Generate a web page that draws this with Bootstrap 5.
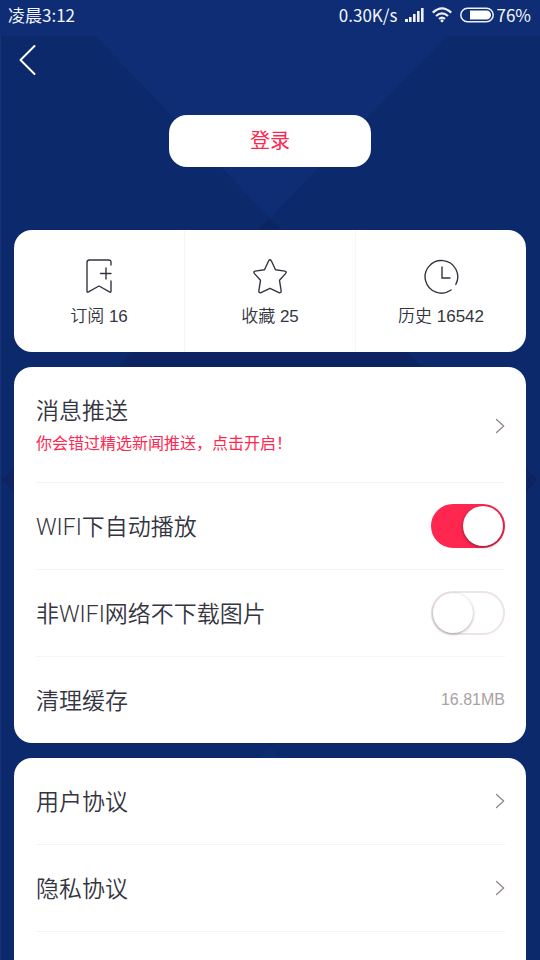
<!DOCTYPE html>
<html lang="zh-CN">
<head>
<meta charset="utf-8">
<meta name="viewport" content="width=device-width, initial-scale=1">
<title>个人中心</title>
<link href="https://cdn.jsdelivr.net/npm/bootstrap@5.3.0/dist/css/bootstrap.min.css" rel="stylesheet">
<style>
  :root { --ink: #343541; --accent: #ff264f; --hairline: #fbf1f3; }
  body { background: #0c296b; color: var(--ink); font-family: Roboto, "Noto Sans CJK SC", sans-serif; }
  .status-strip { height: 36px; padding: 0 9px 0 8px; background: #0e2d75; color: #f4f6fc; font: 17px/30px "Noto Sans CJK SC", sans-serif; }
  .indicators { height: 30px; }
  .battery { margin-right: 2px; }
  .backdrop { top: 36px; left: 0; height: 924px; z-index: -1; }
  .topbar { height: 48px; padding: 0 14px; }
  .back-btn { width: 28px; height: 48px; }
  .login-btn { width: 202px; height: 52px; margin: 31px 0 63px; border-radius: 18px; background: #fff; color: var(--accent); font-size: 20px; }
  .login-btn:hover { background: #fff; color: var(--accent); }
  .panels { padding: 0 14px; gap: 15px; }
  .panel { background: #fff; border-radius: 18px; }
  .panel-open { border-radius: 18px 18px 0 0; }
  .stat { height: 122px; padding-top: 28px; gap: 10px; color: var(--ink); font: 350 17px/26px "Liberation Sans", "Noto Sans CJK SC", sans-serif; }
  .stat + .stat { border-left: 1px solid #fbf3f5; }
  .settings { padding: 0 21px 0 22px; }
  .setting { min-height: 87px; border-bottom: 1px solid var(--hairline); color: var(--ink); font-size: 23px; line-height: 32px; font-weight: 350; }
  .setting-end { min-height: 86px; border-bottom: 0; }
  .setting-tall { min-height: 116px; padding-top: 2px; }
  .setting-name { padding-top: 4px; }
  .hint { color: var(--accent); font-size: 16px; line-height: 32px; font-weight: 400; }
  .amount { color: #aaa1a3; font: 16px/32px "Liberation Sans", sans-serif; }
  .toggle.form-check-input { width: 74px; height: 44px; margin: 0; border: 2px solid #ece4e6; border-radius: 22px; background: #fff; }
  .toggle::before { content: ""; display: block; width: 40px; height: 40px; border-radius: 50%; background: #fff; box-shadow: 0 1px 3px #776a6ea0; }
  .toggle.form-check-input:checked { background: var(--accent); border-color: var(--accent); }
  .toggle:checked::before { margin-left: 30px; box-shadow: 0 1px 3px #70102ad0; }
</style>
<script src="https://cdn.jsdelivr.net/npm/bootstrap@5.3.0/dist/js/bootstrap.bundle.min.js"></script>
</head>
<body>
<div class="position-relative min-vh-100 d-flex flex-column overflow-hidden z-0">
  <svg class="backdrop position-absolute w-100" viewBox="0 0 540 924" preserveAspectRatio="none" aria-hidden="true">
    <path fill="#0e2d75" d="M95 0H447L270 182Z"/>
    <path fill="#0c2562" d="M270 182L538 444L270 710L2 444Z"/>
    <path fill="#0e2d75" d="M270 710L490 924H50Z" opacity=".5"/>
    <path fill="#15327a" d="M0 0H1V924H0Z"/>
  </svg>
  <div class="status-strip d-flex justify-content-between">
    <span>凌晨3:12</span>
    <div class="indicators d-flex align-items-center text-nowrap">
      <span>0.30K/s</span>
      <svg class="ms-2" width="19" height="16" viewBox="0 0 19 16" fill="#eef1fa" aria-hidden="true"><path d="M0 12h3v3H0zM4 10h2.600v5H4zM8 7h2.600v8H8zM12 4h2.600v11H12zM16 1h2.600v14H16z"/></svg>
      <svg class="ms-2 me-1" width="20" height="16" viewBox="0 0 20 16" fill="none" stroke="#eef1fa" stroke-width="2.2" aria-hidden="true"><path d="M.8 5.600Q10-3 19.200 5.600M4 9Q10 3.600 16 9M7 12Q10 9.400 13 12"/><circle cx="10" cy="13.800" r="1.500" fill="#eef1fa" stroke="none"/></svg>
      <svg class="battery ms-1" width="34" height="16" viewBox="0 0 34 16" fill="none" aria-hidden="true"><rect x=".8" y="1.300" width="32.400" height="13.400" rx="6.700" stroke="#eef1fa" stroke-width="1.500"/><path fill="#fff" d="M10 3.500h16.500a4.500 4.500 0 0 1 0 9H10z"/></svg>
      <span>76%</span>
    </div>
  </div>

  <header class="topbar d-flex">
    <button type="button" class="back-btn btn p-0 border-0 d-flex align-items-center justify-content-center" aria-label="返回">
      <svg width="18" height="32" viewBox="0 0 18 32" fill="none" stroke="#fff" stroke-width="2" stroke-linecap="round" stroke-linejoin="round" aria-hidden="true"><path d="M15.500 2L1.500 16L15.500 30"/></svg>
    </button>
  </header>
  <div class="text-center">
    <button type="button" class="login-btn btn border-0 p-0">登录</button>
  </div>

  <main class="panels d-flex flex-column flex-grow-1">
    <nav class="panel row g-0" aria-label="我的内容">
      <a href="#subscriptions" class="stat col d-flex flex-column align-items-center text-decoration-none">
        <svg width="36" height="36" viewBox="0 0 36 36" fill="none" stroke="#343541" stroke-width="1.4" stroke-linecap="round" stroke-linejoin="round" aria-hidden="true"><path d="M30 7V4.500Q30 2 27.500 2H8.500Q6 2 6 4.500V33.200Q6 34.800 7.500 33.900L18 28L28.500 33.900Q30 34.800 30 33V23M19.500 15.500H30M25 10V21"/></svg>
        <span>订阅 16</span>
      </a>
      <a href="#favorites" class="stat col d-flex flex-column align-items-center text-decoration-none">
        <svg width="36" height="36" viewBox="0 0 36 36" fill="none" stroke="#343541" stroke-width="1.4" stroke-linejoin="round" aria-hidden="true"><path d="M16.700 2.800Q18 .8 19.300 2.800L23.500 11.700L32.900 13.100Q35 13.700 33.500 15.600L27.500 22.300L29.200 33Q29.200 35.200 27 34.600L18 30.300L9 34.600Q6.800 35.200 6.800 33L8.500 22.300L2.500 15.600Q1 13.700 3.100 13.100L12.500 11.700Z"/></svg>
        <span>收藏 25</span>
      </a>
      <a href="#history" class="stat col d-flex flex-column align-items-center text-decoration-none">
        <svg width="36" height="36" viewBox="0 0 36 36" fill="none" stroke="#343541" stroke-width="1.4" stroke-linecap="round" aria-hidden="true"><path d="M28 32A16.300 16.300 0 1 1 32.800 26.500M19 9V20H27"/></svg>
        <span>历史 16542</span>
      </a>
    </nav>

    <section class="panel settings">
      <a href="#push" class="setting setting-tall d-flex align-items-center justify-content-between text-decoration-none">
        <span class="setting-name d-flex flex-column"><span>消息推送</span><span class="hint">你会错过精选新闻推送，点击开启！</span></span>
        <svg width="10" height="16" viewBox="0 0 10 16" fill="none" stroke="#918789" stroke-width="1.3" stroke-linecap="round" stroke-linejoin="round" aria-hidden="true"><path d="M1.500 1.500L8.700 8L1.500 14.500"/></svg>
      </a>
      <div class="setting d-flex align-items-center justify-content-between">
        <label class="setting-name" for="autoplay">WIFI下自动播放</label>
        <input class="toggle form-check-input" type="checkbox" role="switch" id="autoplay" checked>
      </div>
      <div class="setting d-flex align-items-center justify-content-between">
        <label class="setting-name" for="noimages">非WIFI网络不下载图片</label>
        <input class="toggle form-check-input" type="checkbox" role="switch" id="noimages">
      </div>
      <a href="#cache" class="setting setting-end d-flex align-items-center justify-content-between text-decoration-none">
        <span class="setting-name">清理缓存</span><span class="amount">16.81MB</span>
      </a>
    </section>

    <section class="panel panel-open settings flex-grow-1">
      <a href="#terms" class="setting d-flex align-items-center justify-content-between text-decoration-none">
        <span class="setting-name">用户协议</span>
        <svg width="10" height="16" viewBox="0 0 10 16" fill="none" stroke="#918789" stroke-width="1.3" stroke-linecap="round" stroke-linejoin="round" aria-hidden="true"><path d="M1.500 1.500L8.700 8L1.500 14.500"/></svg>
      </a>
      <a href="#privacy" class="setting d-flex align-items-center justify-content-between text-decoration-none">
        <span class="setting-name">隐私协议</span>
        <svg width="10" height="16" viewBox="0 0 10 16" fill="none" stroke="#918789" stroke-width="1.3" stroke-linecap="round" stroke-linejoin="round" aria-hidden="true"><path d="M1.500 1.500L8.700 8L1.500 14.500"/></svg>
      </a>
    </section>
  </main>
</div>
</body>
</html>
